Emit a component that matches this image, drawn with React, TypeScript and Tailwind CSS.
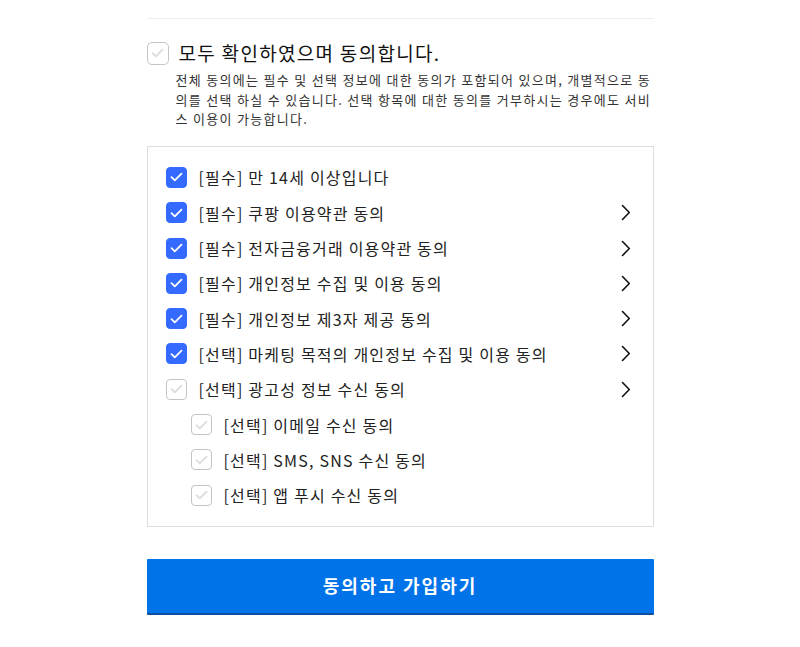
import React, { useState } from "react";

interface Agreement {
  id: number;
  label: string;
  checked: boolean;
  arrow: boolean;
  sub?: boolean;
}

const initialItems: Agreement[] = [
  { id: 1, label: "[필수] 만 14세 이상입니다", checked: true, arrow: false },
  { id: 2, label: "[필수] 쿠팡 이용약관 동의", checked: true, arrow: true },
  { id: 3, label: "[필수] 전자금융거래 이용약관 동의", checked: true, arrow: true },
  { id: 4, label: "[필수] 개인정보 수집 및 이용 동의", checked: true, arrow: true },
  { id: 5, label: "[필수] 개인정보 제3자 제공 동의", checked: true, arrow: true },
  { id: 6, label: "[선택] 마케팅 목적의 개인정보 수집 및 이용 동의", checked: true, arrow: true },
  { id: 7, label: "[선택] 광고성 정보 수신 동의", checked: false, arrow: true },
  { id: 8, label: "[선택] 이메일 수신 동의", checked: false, arrow: false, sub: true },
  { id: 9, label: "[선택] SMS, SNS 수신 동의", checked: false, arrow: false, sub: true },
  { id: 10, label: "[선택] 앱 푸시 수신 동의", checked: false, arrow: false, sub: true },
];

function CheckBox({ checked, big }: { checked: boolean; big?: boolean }) {
  const size = big ? "w-[22px] h-[23px] rounded-[5px]" : "w-[21px] h-[21px] rounded-[4px]";
  return (
    <span
      className={`${size} shrink-0 flex items-center justify-center border ${
        checked ? "bg-[#346aff] border-[#346aff]" : "bg-white border-[#c4c4c4]"
      }`}
    >
      <svg width="13" height="10" viewBox="0 0 13 10" fill="none">
        <path
          d="M1.5 5.2 L4.8 8.3 L11.5 1.7"
          stroke={checked ? "#ffffff" : "#dcdcdc"}
          strokeWidth="1.8"
          strokeLinecap="round"
          strokeLinejoin="round"
        />
      </svg>
    </span>
  );
}

function Chevron() {
  return (
    <svg width="10" height="17" viewBox="0 0 10 17" fill="none">
      <path d="M1.5 1.5 L8.3 8.5 L1.5 15.5" stroke="#111" strokeWidth="1.6" strokeLinecap="round" strokeLinejoin="round" />
    </svg>
  );
}

export default function App() {
  const [items, setItems] = useState(initialItems);
  const allChecked = items.every((i) => i.checked);

  const toggle = (id: number) =>
    setItems((prev) => prev.map((i) => (i.id === id ? { ...i, checked: !i.checked } : i)));

  return (
    <div
      className="w-[800px] h-[647px] bg-white flex justify-center"
      style={{ fontFamily: '"Noto Sans CJK KR", "Noto Sans", sans-serif' }}
    >
      <div className="w-[507px] flex flex-col">
        <div className="mt-[18px] h-px bg-[#eeeeee]" />

        <button
          className="mt-[22px] flex items-center gap-[10px] text-left"
          onClick={() => setItems((prev) => prev.map((i) => ({ ...i, checked: !allChecked })))}
        >
          <CheckBox checked={allChecked} big />
          <span className="text-[19px] leading-[24px] tracking-[1.3px] text-[#111]">모두 확인하였으며 동의합니다.</span>
        </button>

        <p className="mt-[5px] pl-[29px] text-[13px] leading-[19.6px] tracking-[1.3px] text-[#333] break-all">
          전체 동의에는 필수 및 선택 정보에 대한 동의가 포함되어 있으며, 개별적으로 동의를 선택 하실 수 있습니다. 선택 항목에 대한 동의를 거부하시는 경우에도 서비스 이용이 가능합니다.
        </p>

        <div className="mt-[17px] border border-[#dddddd] py-[13px] pl-[18px] pr-[22px]">
          {items.map((item) => (
            <div
              key={item.id}
              className={`h-[35.3px] flex items-center cursor-pointer ${item.sub ? "pl-[25px]" : ""}`}
              onClick={() => toggle(item.id)}
            >
              <CheckBox checked={item.checked} />
              <span className="ml-[12px] flex-1 text-[16px] tracking-[1.2px] text-[#222]">{item.label}</span>
              {item.arrow && <Chevron />}
            </div>
          ))}
        </div>

        <button className="mt-[32px] h-[56px] bg-[#0073e9] border-b-2 border-[#0b4fa0] text-white text-[18px] tracking-[2px] font-bold rounded-[1px]">
          동의하고 가입하기
        </button>
      </div>
    </div>
  );
}
